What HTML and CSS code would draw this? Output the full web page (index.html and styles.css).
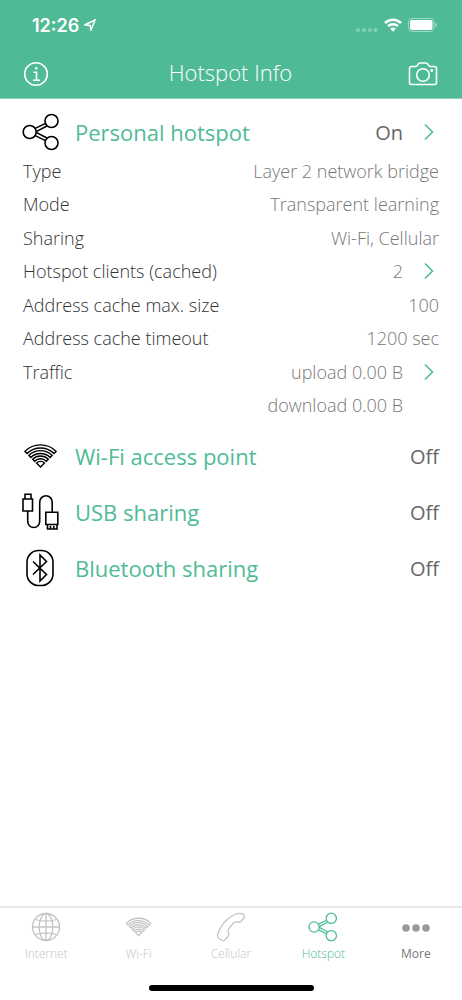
FILE: index.html
```html
<!DOCTYPE html>
<html lang="en">
<head>
  <meta charset="UTF-8">
  <meta name="viewport" content="width=device-width, initial-scale=1.0">
  <title>Hotspot Info</title>
  <link rel="stylesheet" href="styles.css">
</head>
<body>
  <!-- shared icons -->
  <svg class="sprite" aria-hidden="true">
    <symbol id="share" viewBox="0 0 38 38">
      <path d="M13.2 15.4 23.6 10.4M14.2 18.6 25 13M14.2 19.4 25 25M13.2 22.6 23.6 27.6"/>
      <circle cx="7.7" cy="19" r="6.5"/>
      <circle cx="29.5" cy="8" r="6.5"/>
      <circle cx="29.5" cy="30" r="6.5"/>
    </symbol>
    <symbol id="wifi" viewBox="0 0 38 38">
      <path d="M2.900 14.400a22 22 0 0 1 31.200 0l-2.200 2.200a19 19 0 0 0-26.800 0z"/>
      <path d="M6.900 18.400a16.400 16.400 0 0 1 23.200 0l-2 2a13.600 13.600 0 0 0-19.200 0z"/>
      <path d="M10.700 22.200a11 11 0 0 1 15.600 0l-2 2a8.200 8.200 0 0 0-11.600 0z"/>
      <path d="M14.500 26a5.700 5.700 0 0 1 8 0l-4 4z"/>
    </symbol>
    <symbol id="chevron" viewBox="0 0 10 18">
      <path d="M1 1.500 8.500 9 1 16.500"/>
    </symbol>
  </svg>

  <header class="top">
    <div class="status">
      <span class="clock">12:26
        <svg class="location" viewBox="0 0 12 12"><path d="M1 5.800 11 1 7 11 6 6.500z"/></svg>
      </span>
      <span class="signals">
        <svg class="dots" viewBox="0 0 22 4"><circle cx="2" cy="2" r="2"/><circle cx="8" cy="2" r="2"/><circle cx="14" cy="2" r="2"/><circle cx="19.500" cy="2" r="2"/></svg>
        <svg class="wifi-status" viewBox="0 0 18 14"><path d="M1 5a11.600 11.600 0 0 1 16 0M4 8.200a7.300 7.300 0 0 1 10 0"/><path class="solid" d="M6.200 10.800a4.200 4.200 0 0 1 5.600 0L9 13.700z"/></svg>
        <svg class="battery" viewBox="0 0 30 14"><rect class="shell" x=".5" y=".5" width="25.500" height="13" rx="3.800"/><rect class="charge" x="2" y="2" width="22.500" height="10" rx="2.300"/><path class="cap" d="M27.500 4.800c2 .8 2 3.600 0 4.400z"/></svg>
      </span>
    </div>
    <div class="nav">
      <button class="icon-btn" aria-label="Info">
        <svg class="icon-info" viewBox="0 0 26 26"><circle cx="13" cy="13" r="11.300"/><path d="M10.500 11.200h3v7.800M10 19.200h7"/><circle class="solid" cx="13.200" cy="7.200" r="1.300"/></svg>
      </button>
      <h1>Hotspot Info</h1>
      <button class="icon-btn" aria-label="Take screenshot">
        <svg class="icon-camera" viewBox="0 0 30 24"><path d="M3.500 4.500H8c1.500 0 2-3.500 4-3.500h6c2 0 2.500 3.500 4 3.500h4.500a2 2 0 0 1 2 2v14a2 2 0 0 1-2 2h-23a2 2 0 0 1-2-2v-14a2 2 0 0 1 2-2z"/><circle cx="15" cy="13" r="6.300"/><circle class="solid" cx="23.700" cy="8.500" r="1.400"/></svg>
      </button>
    </div>
  </header>

  <main>
    <section>
      <a class="service first" href="#hotspot">
        <svg class="icon"><use href="#share"/></svg>
        <h2>Personal hotspot</h2>
        <span class="state">On</span>
        <svg class="chevron"><use href="#chevron"/></svg>
      </a>
      <dl class="details">
        <div><dt>Type</dt><dd>Layer 2 network bridge</dd></div>
        <div><dt>Mode</dt><dd>Transparent learning</dd></div>
        <div><dt>Sharing</dt><dd>Wi-Fi, Cellular</dd></div>
        <div><dt>Hotspot clients (cached)</dt><dd><a href="#clients">2 <svg class="chevron"><use href="#chevron"/></svg></a></dd></div>
        <div><dt>Address cache max. size</dt><dd>100</dd></div>
        <div><dt>Address cache timeout</dt><dd>1200 sec</dd></div>
        <div><dt>Traffic</dt><dd><a href="#traffic">upload 0.00 B <svg class="chevron"><use href="#chevron"/></svg></a></dd></div>
        <div><dd class="indent">download 0.00 B</dd></div>
      </dl>
    </section>

    <section class="service">
      <svg class="icon thin"><use href="#wifi"/></svg>
      <h2>Wi-Fi access point</h2>
      <span class="state">Off</span>
    </section>
    <section class="service">
      <svg class="icon" viewBox="0 0 38 38"><path d="M3 6V1.200h6V6M1 6h9.500v12H1zM5.700 18v10.500a6 6 0 0 0 12 0V9a6.200 6.200 0 0 1 12.500 0v10M23.800 19.200h12v12.300h-12zM25.500 31.500v4.500H35v-4.500M28.500 33v3M31.800 33v3"/></svg>
      <h2>USB sharing</h2>
      <span class="state">Off</span>
    </section>
    <section class="service">
      <svg class="icon" viewBox="0 0 38 38"><rect x="5" y="1.500" width="26" height="35" rx="11.500"/><path d="M11 12.500 24.500 25.500 18 32V6l6.500 6.500L11 25.500"/></svg>
      <h2>Bluetooth sharing</h2>
      <span class="state">Off</span>
    </section>
  </main>

  <nav class="tabs">
    <a href="#internet">
      <svg viewBox="0 0 30 30"><circle cx="15" cy="15" r="13.500"/><ellipse cx="15" cy="15" rx="6.800" ry="13.500"/><path d="M15 1.500v27M1.500 15h27M4.500 7.500c6 2 15 2 21 0M4.500 22.500c6-2 15-2 21 0"/></svg>
      Internet
    </a>
    <a href="#wi-fi"><svg class="scaled"><use href="#wifi"/></svg>Wi-Fi</a>
    <a href="#cellular">
      <svg viewBox="0 0 30 30"><path d="M19 2.500c3-1.500 6-1.500 8.500 0 1.500 1 1.200 2.500 0 4l-2.500 3c-1.200 1.200-2.500.8-4.500.5-1.500-.3-2.500.5-3.500 1.500-2.500 2.500-4 4.500-4.800 7-.4 1.200 0 2 .5 3 .5 1.200 0 2-.8 3l-2.800 3.200c-1 1.200-2 1.200-3.200.5L2.500 26c-1.200-1-1.200-2.200-.7-3.800C4 14 10.500 6 19 2.500z"/></svg>
      Cellular
    </a>
    <a class="active" href="#hotspot"><svg class="scaled"><use href="#share"/></svg>Hotspot</a>
    <a class="more" href="#more">
      <svg viewBox="0 0 30 30"><circle cx="5" cy="16" r="3.800"/><circle cx="15" cy="16" r="3.800"/><circle cx="25" cy="16" r="3.800"/></svg>
      More
    </a>
  </nav>
  <div class="home-bar"></div>
</body>
</html>
```

FILE: styles.css
```css
:root {
  --green: #4fbb96;
  --grey: #777;
}

* {
  box-sizing: border-box;
}

body {
  margin: 0;
  min-height: 100vh;
  display: flex;
  flex-direction: column;
  background: #fff;
  color: #333;
  font-family: "Open Sans", sans-serif;
  font-weight: 300;
  font-size: 18px;
}

a {
  color: inherit;
  text-decoration: none;
}

svg {
  fill: none;
  stroke: currentColor;
  stroke-width: 2;
  flex-shrink: 0;
}

.sprite {
  display: none;
}

.solid {
  fill: currentColor;
  stroke: none;
}

/* header */
.top {
  background: var(--green);
  color: #fff;
  border-bottom: 1px solid #8fcbb6;
}

.status {
  display: flex;
  justify-content: space-between;
  align-items: center;
  height: 50px;
  padding: 0 24px 0 32px;
}

.clock {
  display: flex;
  align-items: center;
  gap: 5px;
  font-family: Inter, sans-serif;
  font-weight: 600;
  font-size: 18px;
}

.location {
  width: 12px;
  height: 12px;
  stroke-width: 1.5;
}

.signals {
  display: flex;
  align-items: center;
  gap: 6px;
}

.dots {
  width: 22px;
  height: 4px;
  margin-top: 10px;
  fill: #fff;
  stroke: none;
  opacity: .3;
}

.wifi-status {
  width: 18px;
  height: 14px;
  stroke-width: 2.5;
}

.battery {
  width: 30px;
  height: 14px;
  stroke: none;
}

.shell {
  stroke: #fff;
  stroke-width: 1;
  opacity: .45;
}

.charge {
  fill: #fff;
}

.cap {
  fill: #fff;
  opacity: .5;
}

.nav {
  display: flex;
  justify-content: space-between;
  align-items: center;
  height: 48px;
  padding: 0 24px 0 23px;
}

h1 {
  margin: 0;
  padding: 0 0 4px 4px;
  font-weight: 300;
  font-size: 22px;
}

.icon-btn {
  display: flex;
  padding: 0;
  border: none;
  background: none;
  color: #fff;
  cursor: pointer;
}

.icon-info {
  width: 26px;
  height: 26px;
  stroke-width: 1.6;
}

.icon-camera {
  width: 30px;
  height: 24px;
  stroke-width: 1.6;
}

/* content */
main {
  flex: 1;
  padding: 11px 23px;
}

.service {
  display: flex;
  align-items: center;
  height: 56px;
}

.service.first {
  height: 44px;
}

.icon {
  width: 38px;
  height: 38px;
  margin-left: -1px;
  color: #000;
  stroke-width: 1.6;
}

.thin {
  stroke-width: 1.4;
}

h2 {
  flex: 1;
  margin: 0 0 0 15px;
  color: var(--green);
  font-weight: 400;
  font-size: 22px;
}

.state {
  color: #666;
  font-weight: 400;
  font-size: 20px;
}

.chevron {
  width: 10px;
  height: 18px;
  margin: 0 5px 0 21px;
  color: var(--green);
  stroke-width: 1.6;
}

.details {
  display: grid;
  min-height: 268px;
  margin: 0 0 6px;
}

.details div {
  display: flex;
  align-items: center;
  justify-content: space-between;
}

.details dd {
  margin: 0 0 0 auto;
  color: var(--grey);
}

.details dd a {
  display: flex;
  align-items: center;
}

.details .indent {
  margin-right: 36px;
}

/* tab bar */
.tabs {
  display: grid;
  grid-template-columns: repeat(5, 1fr);
  height: 79px;
  padding-top: 4px;
  border-top: 2px solid #e8e8e8;
}

.tabs a {
  display: flex;
  flex-direction: column;
  align-items: center;
  gap: 3px;
  color: #c4c4c4;
  font-size: 12px;
}

.tabs svg {
  width: 30px;
  height: 30px;
  stroke-width: 1.3;
}

.tabs .scaled {
  stroke-width: 1.6;
}

.tabs .active {
  color: var(--green);
}

.tabs .more {
  color: #777;
  font-weight: 400;
}

.tabs .more svg {
  fill: #999;
  stroke: none;
}

.home-bar {
  width: 165px;
  height: 6px;
  margin: 0 auto 9px;
  border-radius: 3px;
  background: #000;
}
```
